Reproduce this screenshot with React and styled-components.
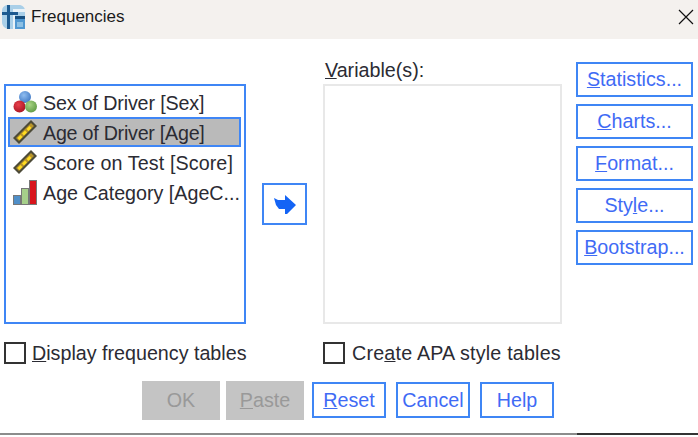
import React from 'react';
import styled, { createGlobalStyle } from 'styled-components';

const GlobalStyle = createGlobalStyle`
    html, body {
        margin: 0;
        padding: 0;
        background: #fff;
    }
    body {
        font-family: "Liberation Sans", Arial, sans-serif;
    }
`

const Dialog = styled.div`
    width: 698px;
    height: 437px;
    display: flex;
    flex-direction: column;
    overflow: hidden;
    background: #fff;
    color: #2b2b33;
    font-size: 19.7px;
`

const TitleBar = styled.div`
    height: 39px;
    flex: none;
    display: flex;
    align-items: center;
    padding: 0 4px 6px 1px;
    box-sizing: border-box;
    background: #f4f1ee;
`

const TitleText = styled.span`
    margin-left: 5px;
    font-size: 17px;
    color: #1a1a1a;
    flex: 1;
`

const Main = styled.div`
    flex: none;
    display: flex;
    height: 285px;
    padding: 23px 5px 0 4px;
    box-sizing: border-box;
`

const SourceColumn = styled.div`
    width: 242px;
    flex: none;
    padding-top: 22px;
    box-sizing: border-box;
`

const SourceList = styled.ul`
    height: 240px;
    margin: 0;
    padding: 1px 3px 0 2px;
    list-style: none;
    box-sizing: border-box;
    border: 2px solid #3f86f5;
`

const Item = styled.li`
    height: 30px;
    display: flex;
    align-items: center;
    box-sizing: border-box;
    padding-left: ${p => (p.$selected ? '3px' : '5px')};
    white-space: nowrap;
    background: ${p => (p.$selected ? '#bababa' : 'transparent')};
    border: ${p => (p.$selected ? '2px solid #3f86f5' : 'none')};
`

const ItemLabel = styled.span`
    margin-left: 6px;
    padding-top: 2px;
    letter-spacing: ${p => p.$tracking || 0}px;
`

const TransferColumn = styled.div`
    width: 77px;
    flex: none;
    display: flex;
    padding: 121px 0 0 16px;
    box-sizing: border-box;
`

const ArrowButton = styled.button`
    width: 45px;
    height: 42px;
    padding: 0;
    display: flex;
    align-items: center;
    justify-content: center;
    background: #fff;
    border: 2px solid #3f86f5;
`

const TargetColumn = styled.div`
    width: 239px;
    flex: none;
    display: flex;
    flex-direction: column;
`

const TargetLabel = styled.div`
    height: 22px;
    padding-left: 2px;
    line-height: 16px;
`

const TargetList = styled.div`
    height: 240px;
    box-sizing: border-box;
    border: 2px solid #e8e8e8;
`

const SideButtons = styled.div`
    margin-left: 14px;
    width: 117px;
    display: flex;
    flex-direction: column;
    gap: 7px;
`

const ActionButton = styled.button`
    width: ${p => p.$width || '100%'};
    height: ${p => p.$height || '35px'};
    padding: 0;
    font: inherit;
    color: #3f6bf5;
    background: #fff;
    border: 2px solid #3f86f5;
    white-space: nowrap;
`

const DisabledButton = styled.button`
    width: 78px;
    height: 39px;
    padding: 0;
    font: inherit;
    color: #999;
    background: #c4c4c4;
    border: none;
`

const OptionsRow = styled.div`
    flex: none;
    height: 57px;
    display: flex;
    padding: 18px 0 0 4px;
    box-sizing: border-box;
`

const Option = styled.label`
    width: ${p => p.$width};
    height: 22px;
    display: flex;
    align-items: center;
    gap: ${p => p.$gap || '6px'};
    letter-spacing: ${p => p.$tracking || 0}px;
    white-space: nowrap;
`

const Box = styled.span`
    width: 22px;
    height: 22px;
    flex: none;
    box-sizing: border-box;
    border: 2px solid #333;
`

const Footer = styled.div`
    flex: none;
    height: 54px;
    display: flex;
    align-items: flex-start;
    padding-left: 142px;
    box-sizing: border-box;
`

const DisabledGroup = styled.div`
    display: flex;
    gap: 6px;
    margin-right: 8px;
`

const MainActions = styled.div`
    display: flex;
    gap: 10px;
    margin-top: 1px;
`

const BottomEdge = styled.div`
    flex: none;
    height: 2px;
    margin-top: -2px;
    background: linear-gradient(90deg, #8c8c8c 0 577px, #333 577px 100%);
`

const Mnemonic = styled.span`
    text-decoration: underline;
`

const AppIcon = () => (
    <svg width="25" height="26" viewBox="0 0 25 26">
        <path d="M7 1h11c3.500 0 6 2.500 6 6v18H8c-4 0-7-3-7-7V7c0-3.500 2.500-6 6-6z" fill="#a9cfe8" />
        <path d="M12 5h12v3H12zM12 9h2v16h-2z" fill="#e8f2f8" />
        <path d="M6 1h3v7h8v3H9v14H6V11H1V8h5z" fill="#1d5a90" />
        <rect x="14" y="13" width="10" height="12" fill="#4f97d0" />
        <rect x="14" y="12" width="10" height="3" fill="#174f80" />
        <rect x="16" y="18" width="6" height="5" fill="#8cc0e4" />
    </svg>
);

const CloseIcon = () => (
    <svg width="16" height="16" viewBox="0 0 16 16">
        <path d="M1 1l14 14M15 1L1 15" stroke="#111" strokeWidth="1.200" fill="none" />
    </svg>
);

const NominalIcon = () => (
    <svg width="24" height="24" viewBox="0 0 24 24">
        <defs>
            <radialGradient id="ballBlue" cx="0.4" cy="0.35" r="0.7">
                <stop offset="0" stopColor="#8fbdf0" />
                <stop offset="1" stopColor="#3f78c4" />
            </radialGradient>
            <radialGradient id="ballRed" cx="0.4" cy="0.35" r="0.7">
                <stop offset="0" stopColor="#e8404c" />
                <stop offset="1" stopColor="#a81422" />
            </radialGradient>
            <radialGradient id="ballGreen" cx="0.4" cy="0.35" r="0.7">
                <stop offset="0" stopColor="#a8d484" />
                <stop offset="1" stopColor="#5f9a44" />
            </radialGradient>
        </defs>
        <circle cx="12" cy="7" r="6" fill="url(#ballBlue)" />
        <circle cx="6.500" cy="16.500" r="6" fill="url(#ballRed)" />
        <circle cx="18" cy="16.500" r="6" fill="url(#ballGreen)" />
    </svg>
);

const RulerIcon = () => (
    <svg width="24" height="24" viewBox="0 0 24 24">
        <path d="M0 18L18 0l6 6L6 24z" fill="#4d4b38" />
        <path d="M3 18L18 3l3 3L6 21z" fill="#b8942a" />
        <path d="M4.500 18l3-3 2 2-3 3zM9 13.500l3-3 2 2-3 3zM13.500 9l3-3 2 2-3 3z" fill="#ffdc20" />
    </svg>
);

const OrdinalIcon = () => (
    <svg width="24" height="25" viewBox="0 0 24 25">
        <rect x="0.500" y="15.500" width="7" height="9" fill="#4f8fc8" stroke="#777" />
        <rect x="8.500" y="8.500" width="7" height="16" fill="#a6d08a" stroke="#777" />
        <rect x="16.500" y="0.500" width="7" height="24" fill="#d8141c" stroke="#777" />
    </svg>
);

const variables = [
    { label: 'Sex of Driver [Sex]', icon: <NominalIcon />, tracking: -0.15 },
    { label: 'Age of Driver [Age]', icon: <RulerIcon />, selected: true, tracking: -0.25 },
    { label: 'Score on Test [Score]', icon: <RulerIcon />, tracking: 0.1 },
    { label: 'Age Category [AgeC...', icon: <OrdinalIcon /> },
];

const App = () => (
    <Dialog>
        <GlobalStyle />
        <TitleBar>
            <AppIcon />
            <TitleText>Frequencies</TitleText>
            <CloseIcon />
        </TitleBar>
        <Main>
            <SourceColumn>
                <SourceList>
                    {variables.map(v => (
                        <Item key={v.label} $selected={v.selected}>
                            {v.icon}
                            <ItemLabel $tracking={v.tracking}>{v.label}</ItemLabel>
                        </Item>
                    ))}
                </SourceList>
            </SourceColumn>
            <TransferColumn>
                <ArrowButton aria-label="Move">
                    <svg width="22" height="19" viewBox="0 0 22 19">
                        <path d="M0 3l4 2 7 0V0l11 10-9 9h-2v-5H5L2 10z" fill="#1464f5" />
                    </svg>
                </ArrowButton>
            </TransferColumn>
            <TargetColumn>
                <TargetLabel><Mnemonic>V</Mnemonic>ariable(s):</TargetLabel>
                <TargetList />
            </TargetColumn>
            <SideButtons>
                <ActionButton><Mnemonic>S</Mnemonic>tatistics...</ActionButton>
                <ActionButton><Mnemonic>C</Mnemonic>harts...</ActionButton>
                <ActionButton><Mnemonic>F</Mnemonic>ormat...</ActionButton>
                <ActionButton>Sty<Mnemonic>l</Mnemonic>e...</ActionButton>
                <ActionButton><Mnemonic>B</Mnemonic>ootstrap...</ActionButton>
            </SideButtons>
        </Main>
        <OptionsRow>
            <Option $width="319px"><Box /><span><Mnemonic>D</Mnemonic>isplay frequency tables</span></Option>
            <Option $gap="7px" $tracking={0.2}><Box /><span>Cre<Mnemonic>a</Mnemonic>te APA style tables</span></Option>
        </OptionsRow>
        <Footer>
            <DisabledGroup>
                <DisabledButton disabled>OK</DisabledButton>
                <DisabledButton disabled><Mnemonic>P</Mnemonic>aste</DisabledButton>
            </DisabledGroup>
            <MainActions>
                <ActionButton $width="74px" $height="36px"><Mnemonic>R</Mnemonic>eset</ActionButton>
                <ActionButton $width="74px" $height="36px">Cancel</ActionButton>
                <ActionButton $width="74px" $height="36px">Help</ActionButton>
            </MainActions>
        </Footer>
        <BottomEdge />
    </Dialog>
);

export default App;
